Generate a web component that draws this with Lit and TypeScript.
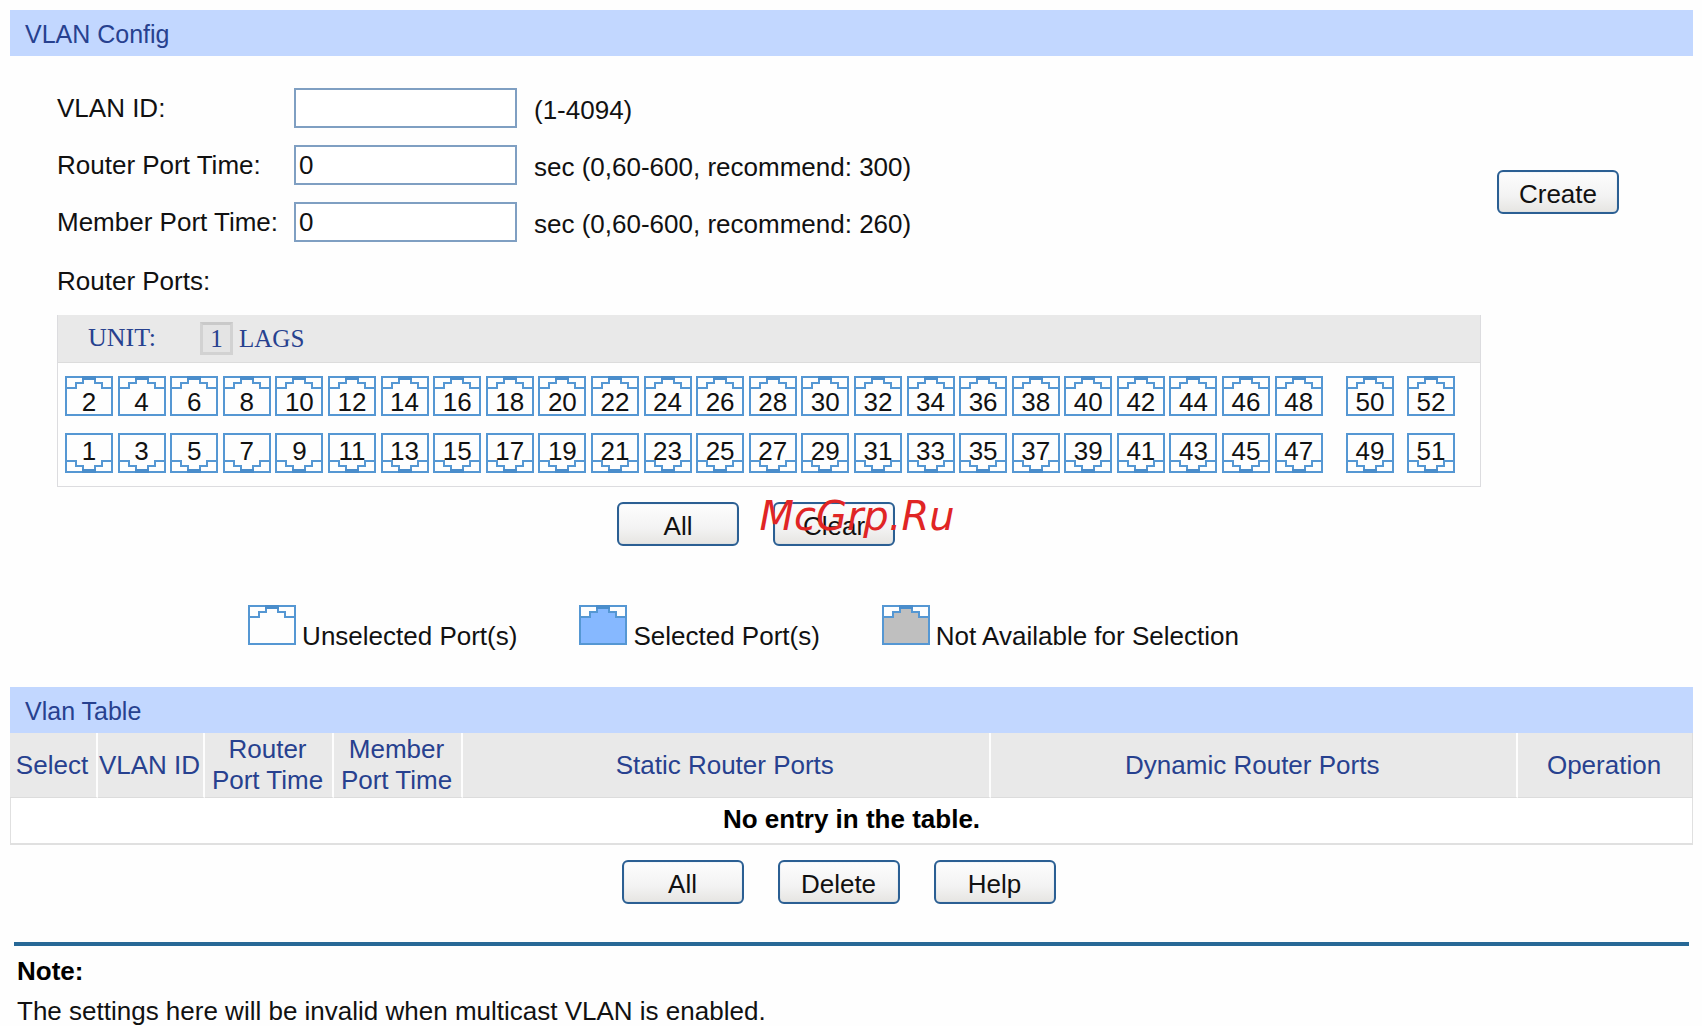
import { LitElement, html, css, svg } from "lit";
import { customElement, property, state } from "lit/decorators.js";
import { classMap } from "lit/directives/class-map.js";

type PortStatus = "free" | "selected" | "unavailable";

/** Outline of an RJ45 socket, latch side up unless `flipped` is set. */
@customElement("port-shape")
export class PortShape extends LitElement {
  @property() status: PortStatus = "free";
  @property({ type: Boolean }) flipped = false;

  static styles = css`
    :host {
      display: inline-block;
      width: 48px;
      height: 40px;
    }
    svg {
      display: block;
      width: 48px;
      height: 40px;
      shape-rendering: crispEdges;
    }
    .flipped {
      transform: scaleY(-1);
    }
    .line {
      fill: none;
      stroke: #5597d3;
      stroke-width: 2;
    }
    .latch {
      fill: #4a8dcb;
    }
    .body {
      fill: #fefefe;
    }
    .selected .body {
      fill: #86b8ff;
    }
    .unavailable .body {
      fill: #bfbfbf;
    }
  `;

  render() {
    return html`
      <svg
        class=${classMap({ [this.status]: true, flipped: this.flipped })}
        viewBox="0 0 48 40"
        aria-hidden="true"
      >
        ${svg`
          <path class="body" d="M1 12H11V7H18V3H30V7H37V12H47V39H1Z" />
          <rect class="line" x="1" y="1" width="46" height="38" />
          <path class="line" d="M1 12H11V7H18V3H30V7H37V12H47" />
          <rect class="latch" x="17" y="0" width="14" height="4" />
        `}
      </svg>
    `;
  }
}

const range = (from: number, to: number): number[] => {
  const out: number[] = [];
  for (let n = from; n <= to; n += 2) out.push(n);
  return out;
};

@customElement("app-root")
export class AppRoot extends LitElement {
  @state() private selected = new Set<number>();

  static styles = css`
    :host {
      display: block;
      font-family: "Liberation Sans", Arial, sans-serif;
      font-size: 26px;
      line-height: 30px;
      color: #111;
      background: #fefefe;
    }
    * {
      box-sizing: border-box;
    }
    .page {
      position: relative;
      padding: 10px 9px 0 10px;
    }
    h2,
    h3,
    p {
      margin: 0;
    }
    button,
    input {
      font: inherit;
      color: inherit;
    }
    .banner {
      padding: 2px 15px 0;
      background: #c2d7ff;
      color: #27418f;
      font-size: 25px;
      font-weight: normal;
      line-height: 44px;
    }

    .config {
      display: flex;
      align-items: flex-start;
      gap: 16px;
      padding: 32px 74px 0 47px;
    }
    .main {
      flex: 1;
      min-width: 0;
    }
    .fields {
      display: grid;
      grid-template-columns: 220px 223px 1fr;
      column-gap: 17px;
      row-gap: 17px;
      line-height: 40px;
    }
    .fields label,
    .ports-title {
      font-size: 26px;
      white-space: nowrap;
    }
    .fields input {
      width: 100%;
      height: 40px;
      padding: 0 3px;
      border: 2px solid #7f9fc2;
      background: #fff;
      outline: none;
    }
    .hint {
      height: 40px;
      padding-top: 2px;
    }
    .ports-title {
      margin: 19px 0 14px;
      font-weight: normal;
      line-height: 40px;
    }

    .button {
      width: 122px;
      height: 44px;
      padding: 4px 0 0;
      border: 2px solid #2b5f93;
      border-radius: 6px;
      background: linear-gradient(#fdfdfd, #f3f3f3 60%, #e6e5e2);
      box-shadow: inset 0 0 1px #9db8d2;
      text-align: center;
    }
    .create {
      margin-top: 82px;
    }
    .actions {
      display: flex;
      justify-content: center;
      gap: 34px;
      padding: 15px 26px 0 0;
    }

    .panel {
      border: 1px solid #dcdcdf;
      border-top: 0;
    }
    .unit-bar {
      display: flex;
      align-items: center;
      height: 48px;
      padding: 0 30px;
      background: #e9e9e9;
      border-bottom: 1px solid #dcdcdc;
      color: #27418f;
      font-family: "Liberation Serif", "Times New Roman", serif;
    }
    .unit-name {
      width: 112px;
      padding-bottom: 2px;
    }
    .unit,
    .lags {
      padding: 0;
      border: 0;
      background: none;
      font-size: 25px;
    }
    .unit {
      width: 33px;
      height: 33px;
      margin-right: 6px;
      border: 3px solid #d2d2d2;
      border-top-color: #c9c9c9;
      background: #e4e4e4;
      line-height: 27px;
    }
    .ports {
      display: grid;
      row-gap: 17px;
      padding: 13px 25px 13px 7px;
    }
    .port-row {
      display: flex;
      gap: 13px;
    }
    .port-group {
      display: flex;
      flex: 1;
      justify-content: space-between;
      margin-right: 10px;
    }
    .port {
      display: grid;
      width: 48px;
      height: 40px;
      padding: 0;
      border: 0;
      background: none;
    }
    .port > * {
      grid-area: 1 / 1;
    }
    .port-number {
      z-index: 1;
      text-align: center;
      line-height: 36px;
    }
    .port-number.upper {
      padding-top: 8px;
    }

    .legend {
      display: flex;
      justify-content: center;
      gap: 62px;
      margin: 0;
      padding: 59px 51px 0 0;
      list-style: none;
    }
    .legend li {
      display: flex;
      align-items: baseline;
      gap: 6px;
      white-space: nowrap;
    }

    .vlans {
      margin-top: 36px;
    }
    table {
      width: 100%;
      table-layout: fixed;
      border-collapse: separate;
      border-spacing: 0;
    }
    .c-select {
      width: 88px;
    }
    .c-id {
      width: 107px;
    }
    .c-time {
      width: 129px;
    }
    .c-operation {
      width: 175px;
    }
    th {
      height: 65px;
      padding: 0 2px 0 0;
      border-right: 2px solid #fdfdfd;
      border-bottom: 1px solid #dcdcdc;
      background: #e9e9e9;
      color: #27418f;
      font-weight: normal;
      line-height: 31px;
      white-space: nowrap;
    }
    th:last-child {
      border-right: 1px solid #dcdcdc;
    }
    td {
      height: 47px;
      padding: 0 0 4px;
      border: solid #e0e0e0;
      border-width: 0 1px 2px;
      background: #fff;
      color: #000;
      font-weight: bold;
      text-align: center;
    }

    .note {
      margin: 38px 4px 0 4px;
      padding: 10px 3px 0;
      border-top: 4px solid #276896;
    }
    .note h3 {
      color: #000;
      font-size: 26px;
      line-height: 30px;
    }
    .note p {
      padding-top: 10px;
    }

    .watermark {
      position: absolute;
      top: 494px;
      left: 12px;
      right: 0;
      color: #e02525;
      font: italic 40px/44px "DejaVu Sans", Verdana, sans-serif;
      text-align: center;
      pointer-events: none;
    }
  `;

  private toggle(port: number) {
    const next = new Set(this.selected);
    if (!next.delete(port)) next.add(port);
    this.selected = next;
  }

  private selectAll() {
    this.selected = new Set([...range(1, 51), ...range(2, 52)]);
  }

  private renderPort(port: number) {
    const upper = port % 2 === 0;
    const on = this.selected.has(port);
    return html`
      <button
        class="port"
        type="button"
        aria-pressed=${on ? "true" : "false"}
        @click=${() => this.toggle(port)}
      >
        <port-shape .status=${on ? "selected" : "free"} .flipped=${!upper}></port-shape>
        <span class=${classMap({ "port-number": true, upper })}>${port}</span>
      </button>
    `;
  }

  private renderPortRow(first: number) {
    return html`
      <div class="port-row">
        <div class="port-group">
          ${range(first, first + 46).map((p) => this.renderPort(p))}
        </div>
        ${range(first + 48, first + 50).map((p) => this.renderPort(p))}
      </div>
    `;
  }

  render() {
    return html`
      <main class="page">
        <section>
          <h2 class="banner">VLAN Config</h2>
          <form class="config" @submit=${(e: Event) => e.preventDefault()}>
            <div class="main">
              <div class="fields">
                <label for="vlan-id">VLAN ID:</label>
                <input id="vlan-id" type="text" />
                <span class="hint">(1-4094)</span>
                <label for="router-time">Router Port Time:</label>
                <input id="router-time" type="text" value="0" />
                <span class="hint">sec (0,60-600, recommend: 300)</span>
                <label for="member-time">Member Port Time:</label>
                <input id="member-time" type="text" value="0" />
                <span class="hint">sec (0,60-600, recommend: 260)</span>
              </div>
              <h3 class="ports-title">Router Ports:</h3>
              <div class="panel">
                <div class="unit-bar">
                  <span class="unit-name">UNIT:</span>
                  <button class="unit" type="button">1</button>
                  <button class="lags" type="button">LAGS</button>
                </div>
                <div class="ports">${this.renderPortRow(2)} ${this.renderPortRow(1)}</div>
              </div>
              <div class="actions">
                <button class="button" type="button" @click=${() => this.selectAll()}>All</button>
                <button class="button" type="button" @click=${() => (this.selected = new Set())}>
                  Clear
                </button>
              </div>
              <ul class="legend">
                <li><port-shape></port-shape>Unselected Port(s)</li>
                <li><port-shape status="selected"></port-shape>Selected Port(s)</li>
                <li><port-shape status="unavailable"></port-shape>Not Available for Selection</li>
              </ul>
            </div>
            <button class="button create" type="submit">Create</button>
          </form>
        </section>

        <section class="vlans">
          <h2 class="banner" id="vlan-table">Vlan Table</h2>
          <table aria-labelledby="vlan-table">
            <colgroup>
              <col class="c-select" />
              <col class="c-id" />
              <col class="c-time" />
              <col class="c-time" />
              <col />
              <col />
              <col class="c-operation" />
            </colgroup>
            <thead>
              <tr>
                <th scope="col">Select</th>
                <th scope="col">VLAN ID</th>
                <th scope="col">Router<br />Port Time</th>
                <th scope="col">Member<br />Port Time</th>
                <th scope="col">Static Router Ports</th>
                <th scope="col">Dynamic Router Ports</th>
                <th scope="col">Operation</th>
              </tr>
            </thead>
            <tbody>
              <tr>
                <td colspan="7">No entry in the table.</td>
              </tr>
            </tbody>
          </table>
          <div class="actions">
            <button class="button" type="button">All</button>
            <button class="button" type="button">Delete</button>
            <button class="button" type="button">Help</button>
          </div>
        </section>

        <section class="note">
          <h3>Note:</h3>
          <p>The settings here will be invalid when multicast VLAN is enabled.</p>
        </section>

        <div class="watermark">McGrp.Ru</div>
      </main>
    `;
  }
}
